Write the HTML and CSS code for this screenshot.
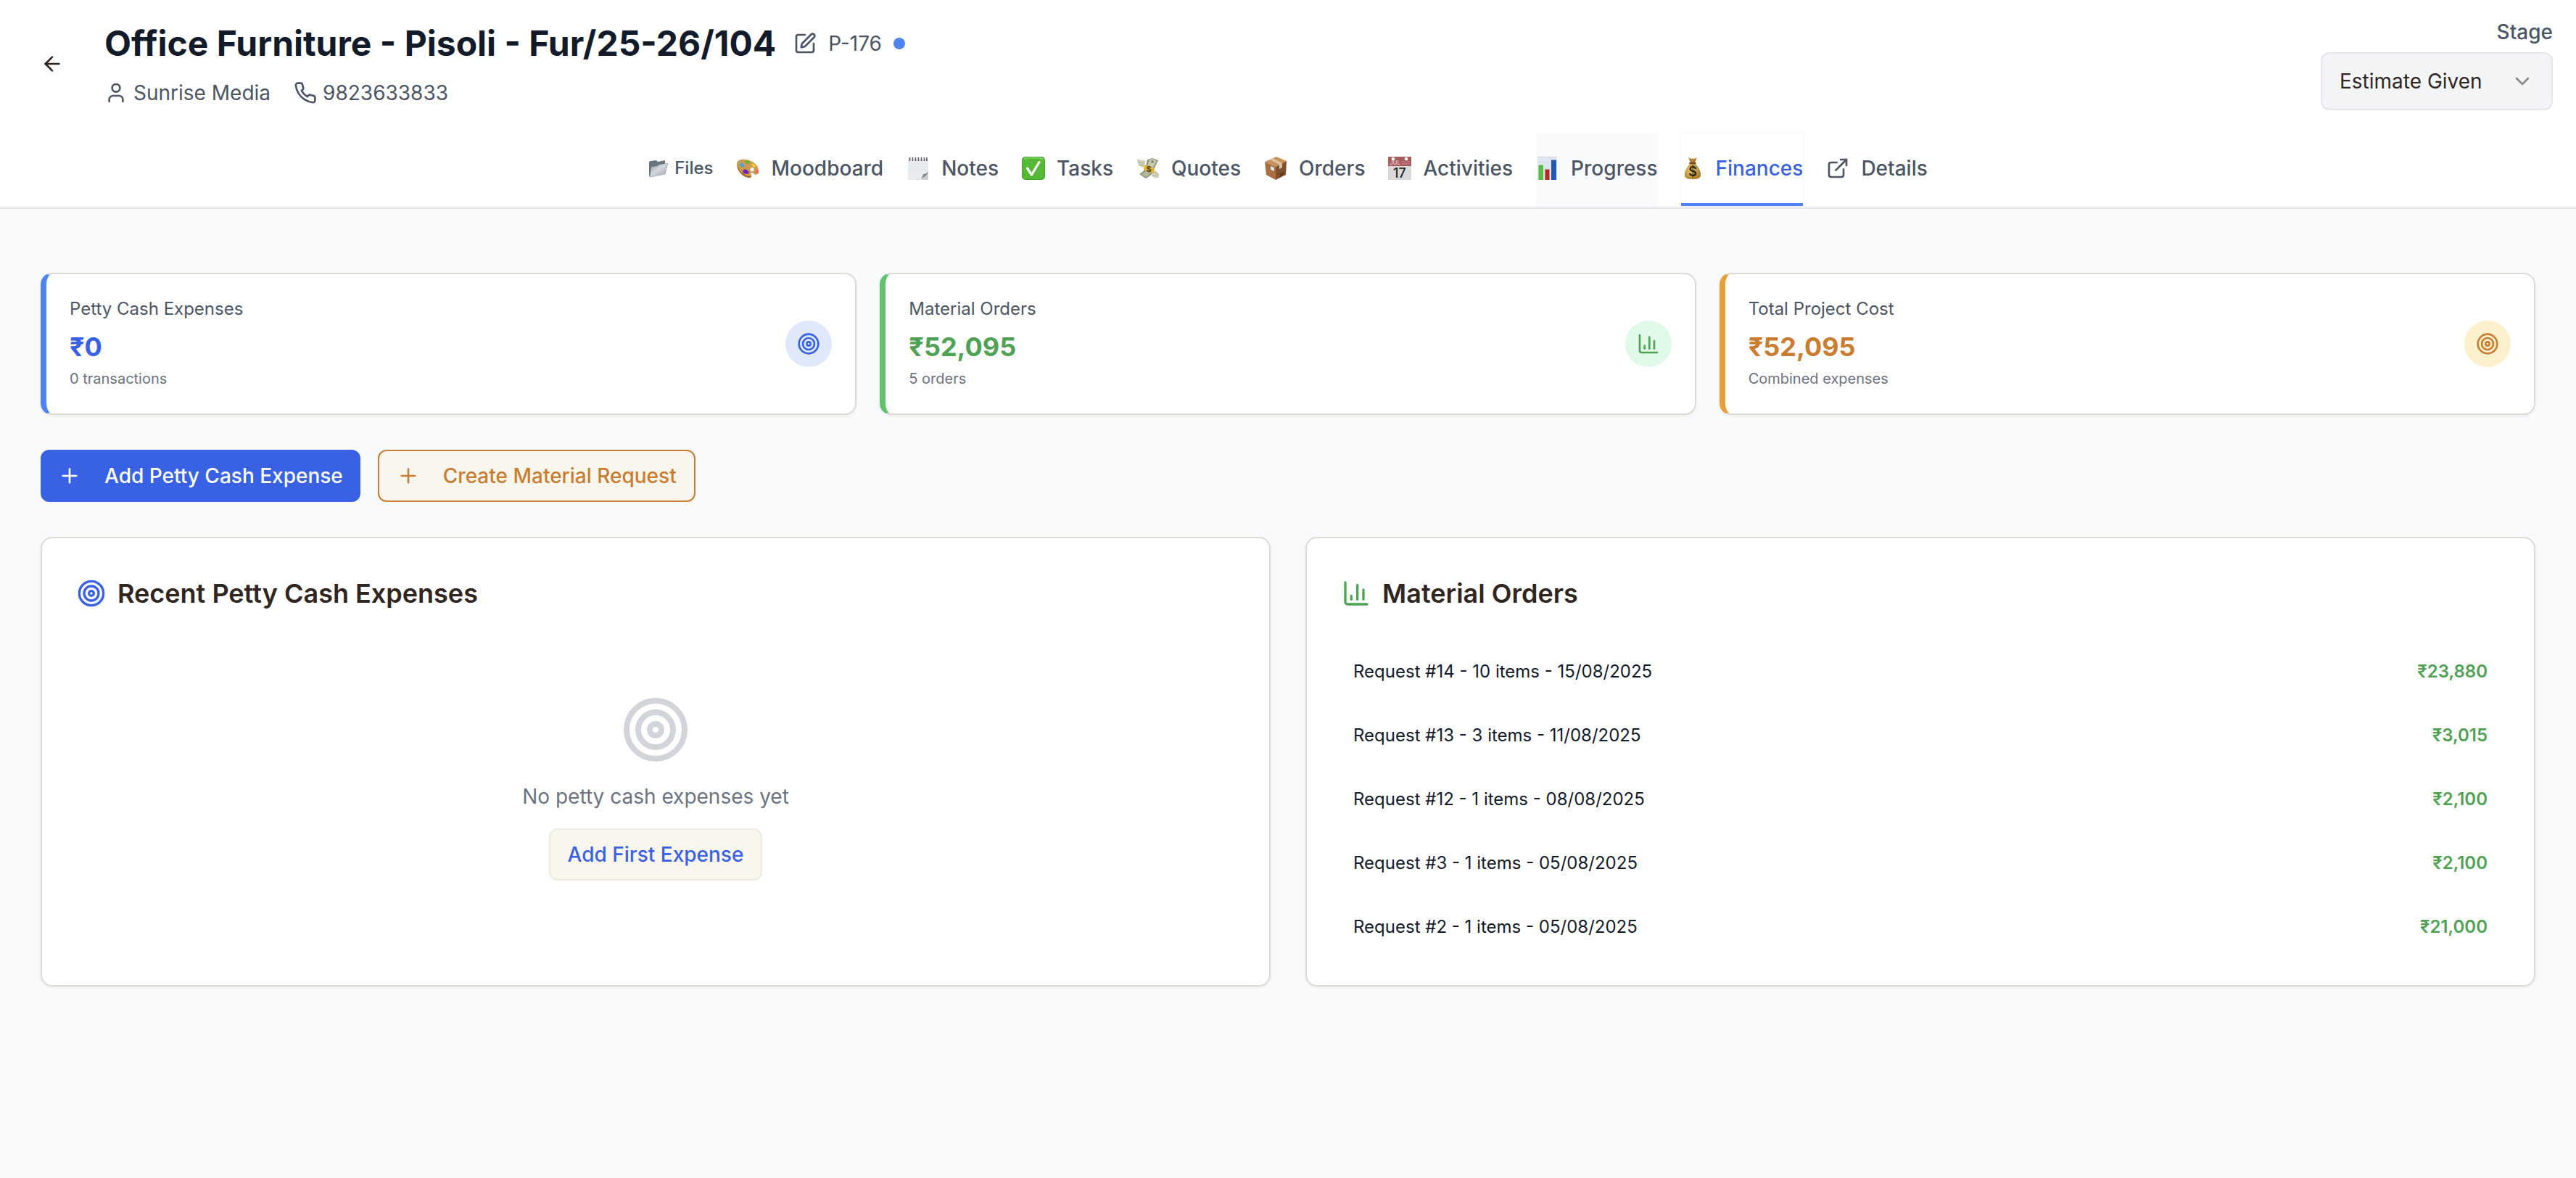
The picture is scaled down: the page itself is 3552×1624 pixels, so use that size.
FILE: index.html
```html
<!DOCTYPE html>
<html lang="en">
<head>
<meta charset="utf-8">
<meta name="viewport" content="width=device-width, initial-scale=1">
<title>Office Furniture - Pisoli - Fur/25-26/104</title>
<link rel="stylesheet" href="styles.css">
</head>
<body>
<svg class="sprite" aria-hidden="true">
  <symbol id="target" viewBox="0 0 24 24"><circle cx="12" cy="12" r="10"/><circle cx="12" cy="12" r="6"/><circle cx="12" cy="12" r="2"/></symbol>
  <symbol id="chart" viewBox="0 0 24 24"><path d="M3 3v16a2 2 0 0 0 2 2h16"/><path d="M18 17V9"/><path d="M13 17V5"/><path d="M8 17v-3"/></symbol>
  <symbol id="plus" viewBox="0 0 24 24"><path d="M5 12h14M12 5v14"/></symbol>
</svg>

<header class="header">
  <div class="header-top">
    <button class="back" type="button" aria-label="Back">
      <svg class="icon" viewBox="0 0 24 24"><path d="m12 19-7-7 7-7"/><path d="M19 12H5"/></svg>
    </button>
    <div class="heading">
      <div class="title-row">
        <h1 class="title">Office Furniture - Pisoli - Fur/25-26/104</h1>
        <div class="title-meta">
          <button class="edit" type="button" aria-label="Edit project">
            <svg class="icon" viewBox="0 0 24 24"><path d="M12 3H5a2 2 0 0 0-2 2v14a2 2 0 0 0 2 2h14a2 2 0 0 0 2-2v-7"/><path d="M18.375 2.625a1 1 0 0 1 3 3l-9.013 9.014a2 2 0 0 1-.853.505l-2.873.84a.5.5 0 0 1-.62-.62l.84-2.873a2 2 0 0 1 .506-.852z"/></svg>
          </button>
          <span>P-176</span>
          <span class="dot"></span>
        </div>
      </div>
      <div class="contact">
        <span class="contact-item">
          <svg class="icon" viewBox="0 0 24 24"><path d="M19 21v-2a4 4 0 0 0-4-4H9a4 4 0 0 0-4 4v2"/><circle cx="12" cy="7" r="4"/></svg>
          Sunrise Media
        </span>
        <span class="contact-item">
          <svg class="icon" viewBox="0 0 24 24"><path d="M22 16.92v3a2 2 0 0 1-2.18 2 19.79 19.79 0 0 1-8.63-3.07 19.5 19.5 0 0 1-6-6 19.79 19.79 0 0 1-3.07-8.67A2 2 0 0 1 4.11 2h3a2 2 0 0 1 2 1.72 12.84 12.84 0 0 0 .7 2.81 2 2 0 0 1-.45 2.11L8.09 9.91a16 16 0 0 0 6 6l1.27-1.27a2 2 0 0 1 2.11-.45 12.84 12.84 0 0 0 2.81.7A2 2 0 0 1 22 16.92z"/></svg>
          9823633833
        </span>
      </div>
    </div>
    <div class="stage">
      <label class="stage-label" for="stage">Stage</label>
      <div class="select-wrap">
        <select class="select" id="stage"><option>Estimate Given</option></select>
        <svg class="icon chevron" viewBox="0 0 24 24"><path d="m6 9 6 6 6-6"/></svg>
      </div>
    </div>
  </div>

  <nav class="tabs" aria-label="Project sections">
    <a class="tab tab-small" href="#files">
      <svg class="emoji emoji-small" viewBox="0 0 28 28">
        <defs><linearGradient id="fold" x1="0" y1="0" x2="1" y2="1"><stop offset="0" stop-color="#8f999f"/><stop offset=".45" stop-color="#d5d8dc"/><stop offset="1" stop-color="#9fa6ac"/></linearGradient></defs>
        <path d="M1 5l2-1 8-1 2 2 10-2v8L3 24 1 25z" fill="#66757d"/>
        <path d="M4 12l8-1 3-2 12-2-4 15-21 4z" fill="url(#fold)" stroke="#87929a" stroke-width=".6"/>
      </svg>
      Files
    </a>
    <a class="tab" href="#moodboard">
      <svg class="emoji" viewBox="0 0 32 32">
        <path d="M1 9C2 4 8 3 14 4c8 1 16 7 17 14 1 4-1 7-4 7-2 0-3-3-5-3s-2 2-1 3c1 2 0 4-3 4C9 29 0 19 1 9zm21 6a2.600 2.600 0 1 0 .1 5.200 2.600 2.600 0 0 0-.1-5.200z" fill="#d09a4e" fill-rule="evenodd"/>
        <path d="M1 11c1 9 8 17 17 18 2 0 3-1 3-2-9 0-17-6-20-16z" fill="#9a6528"/>
        <path d="M12 6l4-1 3 3-2 2-4-1z" fill="#5dbb32"/>
        <path d="M5 10l3-2 4 4-2 3-4-2z" fill="#3fa9e8"/>
        <path d="M21 9l4 1 2 4-4 0z" fill="#f2d13e"/>
        <path d="M26 18l4 1 1 4-4-1z" fill="#ec6a62"/>
        <path d="M9 19l4-2 5 4-2 3-6-1z" fill="#6b25b8"/>
      </svg>
      Moodboard
    </a>
    <a class="tab" href="#notes">
      <svg class="emoji" viewBox="0 0 32 32">
        <path d="M2 3h28v17L17 32H2z" fill="#e9ebed"/><path d="M30 20v12H17c6-1 7-4 7-8 2 0 4-1 6-4z" fill="#cfd2d5"/><path d="M13 32c7-1 9-3 10-8 3 0 5-1 7-4-1 5-5 10-17 12z" fill="#84898d"/>
        <path d="M3 10h26M3 14h26M3 18h26" stroke="#d9e4ec" stroke-width=".8"/>
        <path d="M4.500 1v5M8.500 1v5M12.500 1v5M16.500 1v5M20.500 1v5M24.500 1v5M28 1v5" stroke="#53575b" stroke-width="1.500"/>
      </svg>
      Notes
    </a>
    <a class="tab" href="#tasks">
      <svg class="emoji" viewBox="0 0 32 32">
        <rect width="32" height="32" rx="5" fill="#3f9e2a"/><rect x=".8" y="1" width="30.400" height="30" rx="4.500" fill="#55b935"/><path d="M3 3c6-2 20-2 26 0" stroke="#8ed977" stroke-width="1.500" fill="none"/>
        <path d="M7.500 16l6 9L24 7.500" fill="none" stroke="#fff" stroke-width="3.200" stroke-linecap="round" stroke-linejoin="round"/>
      </svg>
      Tasks
    </a>
    <a class="tab" href="#quotes">
      <svg class="emoji" viewBox="0 0 32 32">
        <path d="M1 3c4 2 8 1 12 3l-3 9C4 15 1 9 1 3z" fill="#d2d2bd"/><path d="M31 29c-4 0-8 1-10-3l2-8c5 0 8 5 8 11z" fill="#d8d6bf"/>
        <path d="M2 7c4 2 6 2 9 2M3 11c3 1 5 1 7 1M23 22c3 0 5 1 8 3M22 26l8 1" stroke="#a9a890" fill="none"/>
        <path d="M15 4l7-2 8 3-6 13c-1 5-5 9-11 12l-9-6c5-3 8-6 9-11z" fill="#8d9477"/>
        <path d="M18 4l4-1 6 3-5 9c-3-1-5-2-8-2z" fill="#c6cbb2"/><circle cx="22" cy="7" r="2" fill="#84936e"/><path d="M7 24c4-2 6-4 7-6l6 4c-2 3-4 5-7 6z" fill="#b3b99d"/>
        <path d="M11 11l14 5-2 7-13-5z" fill="#e4b531"/>
        <text class="glyph-money" x="17" y="21" text-anchor="middle">$</text>
      </svg>
      Quotes
    </a>
    <a class="tab" href="#orders">
      <svg class="emoji" viewBox="0 0 32 32">
        <path d="M1 7L17 0l14 6-15 8z" fill="#c8925c"/><path d="M1 7l15 7v18L3 25z" fill="#a86e3e"/><path d="M16 14l15-8-1 19-14 7z" fill="#80502b"/>
        <path d="M8 4l4-2 13 7v6l-4 2v-6z" fill="#dbc3a0"/><path d="M9 13l5 2v5l-5-2z" fill="#dce4e8"/><path d="M22 24l5-3v3l-5 3z" fill="#5b371c"/>
      </svg>
      Orders
    </a>
    <a class="tab" href="#activities">
      <svg class="emoji" viewBox="0 0 32 32">
        <path d="M0 0h32v32H0z" fill="#dadada"/><path d="M0 0h32v13H0z" fill="#a65c5e"/>
        <path d="M18 7h12M18 10h12" stroke="#bb7b7c" stroke-width="1.500"/><circle cx="7" cy="3" r="2.300" fill="#fff"/><circle cx="25" cy="3" r="2.300" fill="#fff"/>
        <text class="glyph-month" x="2" y="11">JUL</text>
        <text class="glyph-day" x="16" y="29" text-anchor="middle">17</text>
      </svg>
      Activities
    </a>
    <a class="tab tab-hover" href="#progress">
      <svg class="emoji" viewBox="0 0 32 32">
        <path d="M2 0h27v32H2z" fill="#dfe8f0"/><path d="M2 .5h27" stroke="#c7cdd3"/><path d="M3 8h25M3 16h25M3 24h25" stroke="#cbd8e3" stroke-width=".7"/>
        <path d="M3.500 11.500H10V32H3.500z" fill="#58bd45"/><path d="M12.500 17.500h6V32h-6z" fill="#b52a22"/><path d="M21 4.500h7V32h-7z" fill="#2358b5"/>
      </svg>
      Progress
    </a>
    <a class="tab tab-active" href="#finances" aria-current="page">
      <svg class="emoji" viewBox="0 0 32 32">
        <defs><radialGradient id="bag" cx=".4" cy=".45" r=".6"><stop offset="0" stop-color="#f0cf78"/><stop offset="1" stop-color="#a97c28"/></radialGradient></defs>
        <path d="M10 1l4 2 2-1 2 1 4-2-3 8h-6z" fill="#bd8b3c"/><path d="M13 3l2 6M19 3l-2 6" stroke="#8a5f20"/>
        <path d="M13 9h6c5 5 8 11 8 16 0 4-3 6-11 6S5 29 5 25c0-5 3-11 8-16z" fill="url(#bag)"/><path d="M12 9h8" stroke="#72501b" stroke-width="2" stroke-linecap="round"/>
        <text class="glyph-bag" x="16" y="27" text-anchor="middle">$</text>
      </svg>
      Finances
    </a>
    <a class="tab" href="#details">
      <svg class="icon" viewBox="0 0 24 24"><path d="M15 3h6v6"/><path d="M10 14 21 3"/><path d="M18 13v6a2 2 0 0 1-2 2H5a2 2 0 0 1-2-2V8a2 2 0 0 1 2-2h6"/></svg>
      Details
    </a>
  </nav>
</header>

<main class="main">
  <section class="stats" aria-label="Summary">
    <article class="card stat stat-blue">
      <div>
        <p class="stat-label">Petty Cash Expenses</p>
        <p class="stat-value">₹0</p>
        <p class="stat-note">0 transactions</p>
      </div>
      <span class="badge"><svg class="icon"><use href="#target"/></svg></span>
    </article>
    <article class="card stat stat-green">
      <div>
        <p class="stat-label">Material Orders</p>
        <p class="stat-value">₹52,095</p>
        <p class="stat-note">5 orders</p>
      </div>
      <span class="badge"><svg class="icon"><use href="#chart"/></svg></span>
    </article>
    <article class="card stat stat-orange">
      <div>
        <p class="stat-label">Total Project Cost</p>
        <p class="stat-value">₹52,095</p>
        <p class="stat-note">Combined expenses</p>
      </div>
      <span class="badge"><svg class="icon"><use href="#target"/></svg></span>
    </article>
  </section>

  <div class="actions">
    <button class="btn btn-primary" type="button"><svg class="icon"><use href="#plus"/></svg>Add Petty Cash Expense</button>
    <button class="btn btn-outline" type="button"><svg class="icon"><use href="#plus"/></svg>Create Material Request</button>
  </div>

  <div class="panels">
    <section class="card panel">
      <h2 class="panel-title"><svg class="icon icon-blue"><use href="#target"/></svg>Recent Petty Cash Expenses</h2>
      <div class="empty">
        <svg class="icon icon-empty"><use href="#target"/></svg>
        <p class="empty-text">No petty cash expenses yet</p>
        <button class="btn btn-soft" type="button">Add First Expense</button>
      </div>
    </section>
    <section class="card panel">
      <h2 class="panel-title"><svg class="icon icon-green"><use href="#chart"/></svg>Material Orders</h2>
      <ul class="orders">
        <li class="order"><span>Request #14 - 10 items - 15/08/2025</span><span class="amount">₹23,880</span></li>
        <li class="order"><span>Request #13 - 3 items - 11/08/2025</span><span class="amount">₹3,015</span></li>
        <li class="order"><span>Request #12 - 1 items - 08/08/2025</span><span class="amount">₹2,100</span></li>
        <li class="order"><span>Request #3 - 1 items - 05/08/2025</span><span class="amount">₹2,100</span></li>
        <li class="order"><span>Request #2 - 1 items - 05/08/2025</span><span class="amount">₹21,000</span></li>
      </ul>
    </section>
  </div>
</main>
</body>
</html>
```
FILE: styles.css
```css
:root {
  --blue: #3862e3;
  --blue-bright: #4f83f1;
  --green: #4fa254;
  --orange: #ca7c30;
  --ink: #30261f;
  --navy: #131a29;
  --slate: #4b5563;
  --gray: #6b7280;
  --line: #dfdad3;
  --cream: #f9f6ee;
}

* { box-sizing: border-box; }

body {
  margin: 0;
  min-height: 100vh;
  background: #f9fafc;
  color: var(--ink);
  font-family: Inter, "Noto Sans", sans-serif;
  font-size: 28px;
  line-height: 40px;
}

h1, h2, p, ul { margin: 0; padding: 0; }
button, select { font: inherit; }
button { cursor: pointer; }

.sprite { display: none; }

.icon {
  flex: none;
  width: 32px;
  height: 32px;
  fill: none;
  stroke: currentColor;
  stroke-width: 2;
  stroke-linecap: round;
  stroke-linejoin: round;
}

/* Header */
.header {
  background: #fff;
  border-bottom: 2px solid #e5e7eb;
}

.header-top {
  display: flex;
  align-items: center;
  gap: 32px;
  padding: 24px 32px 32px;
}

.back, .edit {
  display: flex;
  align-items: center;
  justify-content: center;
  padding: 0;
  border: 0;
  background: none;
  color: inherit;
}

.back { width: 80px; height: 80px; }

.heading {
  display: flex;
  flex: 1;
  flex-direction: column;
  gap: 16px;
}

.title-row { display: flex; align-items: center; gap: 24px; }

.title {
  color: var(--navy);
  font-size: 48px;
  font-weight: 700;
  line-height: 64px;
}

.title-meta {
  display: flex;
  align-items: center;
  gap: 16px;
  color: var(--slate);
}

.dot {
  width: 16px;
  height: 16px;
  border-radius: 50%;
  background: var(--blue-bright);
}

.contact { display: flex; gap: 32px; color: var(--slate); }
.contact-item { display: flex; align-items: center; gap: 8px; }

.stage {
  display: flex;
  flex-direction: column;
  align-items: flex-end;
  gap: 8px;
}

.stage-label { color: var(--slate); font-weight: 500; }

.select-wrap { display: grid; align-items: center; width: 320px; }

.select {
  grid-area: 1 / 1;
  height: 80px;
  padding: 0 24px;
  appearance: none;
  border: 2px solid #e5e7eb;
  border-radius: 12px;
  background: #f3f4f6;
  color: var(--ink);
}

.chevron {
  grid-area: 1 / 1;
  justify-self: end;
  margin-right: 26px;
  color: #8f8984;
  pointer-events: none;
}

/* Tabs */
.tabs {
  display: flex;
  justify-content: center;
  gap: 32px;
  border-bottom: 2px solid #f3f4f6;
}

.tab {
  display: flex;
  align-items: center;
  gap: 16px;
  height: 100px;
  border-bottom: 4px solid transparent;
  color: var(--slate);
  font-weight: 500;
  text-decoration: none;
}

.tab-small { gap: 8px; font-size: 24px; }
.tab-hover { background: #f9fafc; }

.tab-active {
  border-color: var(--blue-bright);
  color: var(--blue);
  box-shadow: 0 0 4px rgba(0, 0, 0, .06);
}

.emoji { flex: none; width: 32px; height: 32px; }
.emoji-small { width: 28px; height: 28px; }
.glyph-money { font-size: 11px; font-weight: 700; fill: #4a431e; }
.glyph-month { font-size: 8px; fill: #e8cfcf; }
.glyph-day { font-size: 18px; font-weight: 500; fill: #222; }
.glyph-bag { font-size: 18px; font-weight: 600; fill: #2c2410; }

/* Content */
.main {
  display: flex;
  flex-direction: column;
  gap: 48px;
  padding: 88px 56px;
}

.card {
  border: 2px solid var(--line);
  border-radius: 16px;
  background: #fff;
  box-shadow: 0 2px 4px rgba(0, 0, 0, .06);
}

.stats {
  display: grid;
  grid-template-columns: repeat(3, 1fr);
  gap: 32px;
}

.stat {
  display: flex;
  align-items: center;
  justify-content: space-between;
  padding: 32px;
  border-left: 8px solid var(--edge);
}

.stat-blue { --edge: var(--blue-bright); --tone: var(--blue); --tint: #dfe9fb; }
.stat-green { --edge: #5fc36d; --tone: var(--green); --tint: #e1f9e8; }
.stat-orange { --edge: #e7a13c; --tone: var(--orange); --tint: #fbf2cd; }

.stat-label {
  margin-bottom: 8px;
  color: var(--slate);
  font-size: 24px;
  line-height: 32px;
}

.stat-value {
  color: var(--tone);
  font-size: 36px;
  font-weight: 700;
  line-height: 56px;
}

.stat-note { color: var(--gray); font-size: 20px; line-height: 32px; }

.badge {
  display: flex;
  padding: 16px;
  border-radius: 50%;
  background: var(--tint);
  color: var(--tone);
}

.actions { display: flex; gap: 24px; }

.btn {
  display: flex;
  align-items: center;
  gap: 32px;
  height: 72px;
  padding: 0 24px;
  border: 2px solid transparent;
  border-radius: 12px;
  font-weight: 500;
}

.btn-primary { padding: 0 22px; border-color: var(--blue); background: var(--blue); color: #fff; }
.btn-outline { border-color: var(--orange); background: var(--cream); color: var(--orange); }
.btn-soft { border-color: #eeebe5; background: var(--cream); color: var(--blue); }

.panels {
  display: grid;
  grid-template-columns: repeat(2, 1fr);
  gap: 48px;
}

.panel {
  display: flex;
  flex-direction: column;
  gap: 48px;
  padding: 48px;
}

.panel-title {
  display: flex;
  align-items: center;
  gap: 16px;
  font-size: 36px;
  font-weight: 600;
  line-height: 56px;
}

.panel-title .icon { width: 40px; height: 40px; }
.icon-blue { color: var(--blue); }
.icon-green { color: var(--green); }

.empty {
  display: flex;
  flex-direction: column;
  align-items: center;
  gap: 24px;
  padding: 64px 0;
}

.icon-empty { width: 96px; height: 96px; color: #d1d5db; }
.empty-text { color: var(--gray); }

.orders {
  display: flex;
  flex-direction: column;
  gap: 24px;
  list-style: none;
}

.order {
  display: flex;
  align-items: center;
  justify-content: space-between;
  padding: 16px;
  color: var(--navy);
  font-size: 24px;
  line-height: 32px;
}

.amount { color: var(--green); font-weight: 600; }
```
